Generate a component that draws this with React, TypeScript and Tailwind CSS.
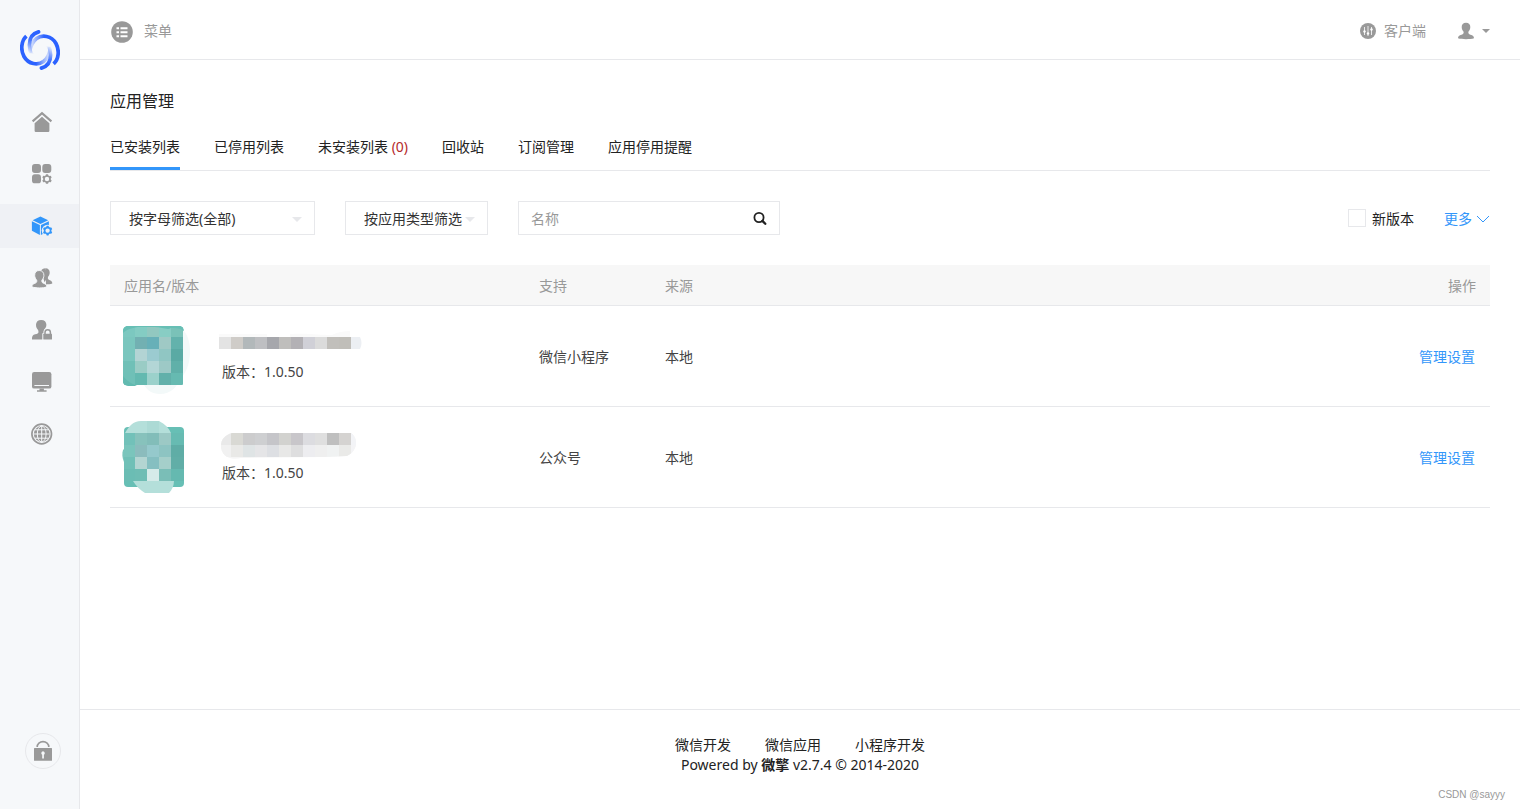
import type { ReactNode } from "react";

type Cell = [number, number, number, number, string];

function Gear({ cx, cy, halo }: { cx: number; cy: number; halo: string }) {
  const teeth = [0, 60, 120, 180, 240, 300];
  return (
    <g>
      <circle cx={cx} cy={cy} r={5.9} fill={halo} />
      {teeth.map((a) => (
        <rect key={a} x={cx - 1.2} y={cy - 4.8} width={2.4} height={2.6} rx={0.6} fill="currentColor" transform={`rotate(${a} ${cx} ${cy})`} />
      ))}
      <circle cx={cx} cy={cy} r={3} fill={halo} stroke="currentColor" strokeWidth={1.6} />
    </g>
  );
}

function Icon({ children }: { children: ReactNode }) {
  return (
    <svg viewBox="0 0 22 22" className="size-[22px]" fill="currentColor" aria-hidden="true">
      {children}
    </svg>
  );
}

const navItems: { label: string; active?: boolean; icon: ReactNode }[] = [
  {
    label: "首页",
    icon: (
      <Icon>
        <path d="M1.6 10.4 11 2.2l9.4 8.2" fill="none" stroke="currentColor" strokeWidth="2.1" />
        <path d="M3.6 12.2 11 5.8l7.4 6.4v7.6a1.2 1.2 0 0 1-1.2 1.2H4.8a1.2 1.2 0 0 1-1.2-1.2z" />
      </Icon>
    ),
  },
  {
    label: "平台",
    icon: (
      <Icon>
        <rect x="1" y="1" width="9" height="9" rx="2.9" />
        <rect x="11.3" y="1" width="9" height="9" rx="2.9" />
        <rect x="1" y="11.3" width="9" height="9" rx="2.9" />
        <Gear cx={16} cy={16} halo="#f6f8fa" />
      </Icon>
    ),
  },
  {
    label: "应用",
    active: true,
    icon: (
      <Icon>
        <path d="M9.4 1.5 17.2 5.3 9.4 9.1 1.6 5.3z" />
        <path d="M.9 6.2 8.9 10.1v9.9L.9 15.8z" />
        <path d="M9.9 10.1 17.9 6.2v9.6L9.9 20z" />
        <Gear cx={16.6} cy={15.6} halo="#eff1f5" />
      </Icon>
    ),
  },
  {
    label: "用户",
    icon: (
      <Icon>
        <path d="M14.6 1.2c2.6 0 4.1 1.8 4.1 4.3 0 2-1 3.6-1.8 4.6-.3 1.9.3 2.5 2 3.2 1.6.7 2.4 1.2 2.4 3.3-2 .8-4 .9-6.3.9z" />
        <path d="M10.2 3.6c.6-1.5 2-2.4 4.3-2.4l2 9-3 5z" />
        <path d="M8.2 3.5c3 0 4.7 2 4.7 4.8 0 2.1-1 3.8-2 4.8-.3 2 .1 2.6 2 3.3 1.8.7 2.8 1.4 2.8 3.4-2 .9-4.4 1.1-7.3 1.1s-5.500-.2-7.500-1.1c0-2 1-2.700 2.800-3.400 1.900-.7 2.300-1.300 2-3.300-1-1-2-2.700-2-4.800 0-2.800 1.500-4.800 4.500-4.800z" stroke="#f6f8fa" strokeWidth="0.9" />
      </Icon>
    ),
  },
  {
    label: "权限",
    icon: (
      <Icon>
        <path d="M10.200.9c3.300 0 5.200 2 5.200 4.900 0 2.400-1.400 3.900-2.400 4.900-.6 1.500-.4 2.100-.4 2.900v7H1c0-3.700.9-4.600 3.200-5.300 2.200-.7 3.300-1.200 3.300-2.400 0-.9-.2-1.600-.6-2.200-1-1-1.900-2.500-1.900-4.900 0-2.900 1.900-4.900 5.200-4.900z" />
        <path d="M11.300 21.500v-7.300h1.400v-1c0-2 1.500-3.700 4-3.700s4 1.700 4 3.700v1H22v7.300z" fill="#f6f8fa" />
        <path d="M14 15v-1.500a2.700 2.700 0 0 1 5.400 0V15" fill="none" stroke="currentColor" strokeWidth="1.500" />
        <rect x="12.300" y="14.800" width="8.700" height="5.800" rx="0.500" />
      </Icon>
    ),
  },
  {
    label: "站点",
    icon: (
      <Icon>
        <rect x="1" y="1" width="19.400" height="16.600" rx="2.200" />
        <rect x="3.400" y="14" width="14.600" height="1" fill="#f6f8fa" />
        <path d="M8.500 17.500h4.400v1.700h2.700v1.500H6v-1.500h2.500z" />
      </Icon>
    ),
  },
  {
    label: "系统",
    icon: (
      <Icon>
        <circle cx="10.700" cy="11" r="9.800" fill="none" stroke="currentColor" strokeWidth="1.700" />
        <circle cx="10.700" cy="11" r="7.900" />
        <g fill="none" stroke="#f6f8fa" strokeWidth="1">
          <ellipse cx="10.700" cy="11" rx="4.400" ry="8" />
          <path d="M10.700 3v16M2.700 11h16M4 6.800h13.400M4 15.200h13.400" />
        </g>
      </Icon>
    ),
  },
];

function Logo() {
  return (
    <svg viewBox="0 0 40 40" className="size-10" fill="none" aria-hidden="true">
      <defs>
        <linearGradient id="sweep" gradientUnits="userSpaceOnUse" x1="16" y1="30" x2="31" y2="30">
          <stop offset="0" stopColor="#2b62ff" />
          <stop offset="0.500" stopColor="#2b62ff" stopOpacity="0.500" />
          <stop offset="1" stopColor="#2b62ff" stopOpacity="0" />
        </linearGradient>
        <linearGradient id="tail" gradientUnits="userSpaceOnUse" x1="13" y1="5" x2="10" y2="24">
          <stop offset="0" stopColor="#2b62ff" />
          <stop offset="0.300" stopColor="#2b62ff" stopOpacity="0.850" />
          <stop offset="1" stopColor="#2b62ff" stopOpacity="0" />
        </linearGradient>
        <g id="half">
          <path d="M6.400 6.200C1 11 .5 20 4 26.500 8.500 34.500 18 35.500 23.500 31.500 28 28 30 23 30.300 17" stroke="url(#sweep)" strokeWidth="3.700" />
          <path d="M18.600 1.900C12.500 3.500 9.400 8.500 9.400 15c0 4 .8 7 2.600 10" stroke="url(#tail)" strokeWidth="3.700" strokeLinecap="round" />
        </g>
      </defs>
      <use href="#half" />
      <use href="#half" transform="rotate(180 20 20)" />
    </svg>
  );
}

function Cells({ cells }: { cells: Cell[] }) {
  return (
    <>
      {cells.map(([x, y, w, h, fill], i) => (
        <rect key={i} x={x} y={y} width={w} height={h} fill={fill} shapeRendering="crispEdges" />
      ))}
    </>
  );
}

function grid(xs: number[], ys: number[], rows: string[][]): Cell[] {
  return rows.flatMap((row, r) =>
    row.map((c, i): Cell => [xs[i], ys[r], xs[i + 1] - xs[i], ys[r + 1] - ys[r], c]),
  );
}

function AvatarA() {
  const cells = grid([1, 13, 25, 37, 49, 61], [9, 19, 31, 43, 55, 67], [
    ["#7cc8c0", "#84ccc3", "#92c8c0", "#88cdc4", "#7ac2b8"],
    ["#7ac6be", "#72b0b2", "#67b0b8", "#9fc9c5", "#63b2ac"],
    ["#7ac6be", "#b3d4d4", "#9bcbd0", "#90c6c3", "#5aaaa4"],
    ["#70c0b7", "#9accc5", "#b3d6d6", "#9dc9c6", "#60b0a9"],
    ["#6fc0b7", "#64b9b0", "#9bd1cb", "#62b0aa", "#66bab1"],
  ]);
  return (
    <svg viewBox="0 0 68 76" className="h-[76px] w-[68px] shrink-0" role="img" aria-label="应用图标">
      <path d="M60 11c5 4 8 12 8 22 0 13-4 22-10 28-3 8-9 15-20 15-8 0-13-4-16-9z" fill="#f3f9f9" />
      <clipPath id="clipA"><rect x="1" y="8" width="61" height="60" rx="5" /></clipPath>
      <g clipPath="url(#clipA)">
        <rect x="1" y="8" width="60" height="59" fill="#67bfb5" />
        <Cells cells={cells} />
        <path d="M1 8h61v5c-4-3-9-3-13-3-3 2-6 0-9 0-12-2-30-3-39 5z" fill="#67bfb5" />
        <path d="M1 58c4 5 9 8 14 10H1z" fill="#62bab0" />
      </g>
    </svg>
  );
}

function AvatarB() {
  const cells = grid([2, 13, 25, 37, 49, 62], [14, 26, 38, 50, 62], [
    ["#72c1b9", "#87c2bc", "#82bdb9", "#9cc9c5", "#67bbb2"],
    ["#7ac5bc", "#8bbcbd", "#95c9cc", "#8dc4c2", "#5fada6"],
    ["#70c0b7", "#b3d5d2", "#85bfc1", "#a5cfca", "#61aea7"],
    ["#6bbdb4", "#6ebdb4", "#d5ebe9", "#7abeb7", "#65b9b0"],
  ]);
  return (
    <svg viewBox="0 0 68 76" className="h-[76px] w-[68px] shrink-0" role="img" aria-label="应用图标">
      <clipPath id="clipB"><rect x="2" y="8" width="60" height="60" rx="4" /></clipPath>
      <g clipPath="url(#clipB)">
        <rect x="2" y="8" width="60" height="60" fill="#67bfb5" />
        <Cells cells={cells} />
      </g>
      <path d="M1 31c-1 3-1 8 1 12V30z" fill="#7ac5bc" />
      <path d="M3 14C7 7 11 2 19 2h18c6 3 10 7 12 12z" fill="#b4dfda" />
      <path d="M25 2h12v12H25z" fill="#acdad5" />
      <path d="M11 62h41c0 4-2 9-5 12H23C18 71 14 67 11 62z" fill="#b4dfda" />
    </svg>
  );
}

function NameA() {
  const cs = ["#e3e3e3", "#cfccc8", "#b2b8ba", "#bebfc2", "#a6a7ac", "#bfbebc", "#b3b1b5", "#d0d0d7", "#dbdbdb", "#c1bfbb", "#c0beb9"];
  return (
    <svg viewBox="0 0 144 32" className="h-8 w-36" role="img" aria-label="应用名">
      <path d="M1 6h48v3H1zM72 6c20-1 30 1 42 1 6-3 12-4 18-4v6H72z" fill="#fafafa" />
      <Cells cells={cs.map((c, i): Cell => [1 + i * 12, 9, 12, 12, c])} />
      <path d="M133 9h9c2 4 2 8 0 12h-9z" fill="#eceff3" />
    </svg>
  );
}

function NameB() {
  const xs = [1, 13, 25, 37, 49, 61, 73, 85, 97, 109, 121, 133, 139];
  const cells = grid(xs, [4, 16, 28], [
    ["#e9e9e9", "#d9d9d4", "#cccccd", "#cecfd1", "#c5c5c9", "#d2d2cf", "#c8c6ca", "#dcdce0", "#dfdfdf", "#bfbfbf", "#d5d3d1", "#f3f4f7"],
    ["#f1f1f1", "#e9e9e7", "#dfe4e5", "#e5e5e7", "#dddfe3", "#e8e8e7", "#dededf", "#ededf0", "#efefef", "#f0f2f2", "#eaeae8", "#f4f4f6"],
  ]);
  return (
    <svg viewBox="0 0 144 32" className="h-8 w-36" role="img" aria-label="应用名">
      <clipPath id="clipName"><path d="M14 4h119c3 2 5 5 5 10s-3 10-9 13c-34 2-70 1-106 2C11 32 3 26 3 17 3 10 7 6 14 4z" /></clipPath>
      <g clipPath="url(#clipName)">
        <rect width="144" height="32" fill="#f5f5f5" />
        <Cells cells={cells} />
      </g>
    </svg>
  );
}

const apps = [
  { avatar: <AvatarA />, name: <NameA />, version: "1.0.50", support: "微信小程序", source: "本地" },
  { avatar: <AvatarB />, name: <NameB />, version: "1.0.50", support: "公众号", source: "本地" },
];

function Caret({ className }: { className: string }) {
  return (
    <svg viewBox="0 0 10 5" className={className} fill="currentColor" aria-hidden="true">
      <path d="M0 0h10L5 5z" />
    </svg>
  );
}

function Filter({ label, className }: { label: string; className: string }) {
  return (
    <div className={`relative ${className}`}>
      <select aria-label={label} className="h-[34px] w-full appearance-none border border-[#e7e8eb] bg-white pt-0.5 pl-[18px] text-[#333] outline-none">
        <option>{label}</option>
      </select>
      <Caret className="pointer-events-none absolute top-4 right-[13px] h-[5px] w-[10px] text-[#e7e8eb]" />
    </div>
  );
}

function Tab({ children, active }: { children: ReactNode; active?: boolean }) {
  return (
    <a href="#" aria-current={active ? "page" : undefined} className={`border-b-3 pt-[9px] pb-2 leading-6 ${active ? "border-[#3296fa]" : "border-transparent"}`}>
      {children}
    </a>
  );
}

export default function App() {
  return (
    <div className="flex min-h-screen bg-white font-['Noto_Sans','Noto_Sans_CJK_SC',sans-serif] text-sm text-[#222]">
      <aside className="flex w-20 shrink-0 flex-col border-r border-[#e7e8eb] bg-[#f6f8fa] pb-10 text-[#999]">
        <a href="#" aria-label="微擎" className="mt-[30px] mb-[30px] ml-5 size-10">
          <Logo />
        </a>
        <nav className="flex flex-col gap-2">
          {navItems.map((item) => (
            <a
              key={item.label}
              href="#"
              aria-label={item.label}
              className={`flex h-11 items-center justify-center pl-1 ${item.active ? "bg-[#eff1f5] text-[#3296fa]" : ""}`}
            >
              {item.icon}
            </a>
          ))}
        </nav>
        <button type="button" aria-label="锁定" className="mt-auto ml-[25px] flex size-9 items-center justify-center rounded-full border border-[#e7e8eb]">
          <svg viewBox="0 0 20 22" className="h-[22px] w-5" fill="currentColor" aria-hidden="true">
            <path d="M4.200 7a5.800 5.400 0 0 1 11.600 0" fill="none" stroke="currentColor" strokeWidth="1.600" />
            <rect x="1" y="8" width="18" height="12.800" rx="0.500" />
            <path d="M10 11.300a1.900 1.900 0 0 1 .9 3.500v3.700H9.200v-3.700a1.900 1.900 0 0 1 .8-3.500z" fill="#f6f8fa" />
          </svg>
        </button>
      </aside>

      <div className="flex min-w-0 flex-1 flex-col">
        <header className="flex h-[60px] items-center justify-between border-b border-[#e7e8eb] px-[30px] pt-0.5 text-[#999]">
          <button type="button" className="flex items-center gap-2.5">
            <svg viewBox="0 -1 24 24" className="size-6" fill="currentColor" aria-hidden="true">
              <circle cx="12" cy="12" r="10.800" />
              <path d="M6.500 7.200H9v2H6.500zM10.500 7.200h7v2h-7zM6.500 11.200H9v2H6.500zM10.500 11.200h7v2h-7zM6.500 15.200H9v2H6.500zM10.500 15.200h7v2h-7z" fill="#fff" />
            </svg>
            菜单
          </button>
          <div className="flex items-center gap-[31px]">
            <a href="#" className="flex items-center gap-2">
              <svg viewBox="0 0 16 16" className="size-4" fill="currentColor" aria-hidden="true">
                <circle cx="8" cy="8" r="8" />
                <path d="M4.500 4v8M8 3v10M11.500 4v8" stroke="#fff" strokeWidth="0.800" />
                <circle cx="4.500" cy="8.500" r="1.200" fill="#fff" />
                <circle cx="8" cy="10.500" r="1.200" fill="#fff" />
                <circle cx="11.500" cy="6.500" r="1.200" fill="#fff" />
              </svg>
              客户端
            </a>
            <button type="button" aria-label="账户" className="flex items-center gap-[7px]">
              <svg viewBox="0 0 18 18" className="size-[18px]" fill="currentColor" aria-hidden="true">
                <path d="M9 .8c2.900 0 4.300 1.800 4.300 4.300 0 2-.9 3.700-1.900 4.700-.2 1.800.1 2.200 2.100 2.900 2.300.8 3.500 1.400 3.500 3.600-2 .7-5 .9-8 .9s-6-.2-8-.9c0-2.200 1.200-2.800 3.500-3.600 2-.7 2.300-1.100 2.100-2.900-1-1-1.900-2.700-1.900-4.700C4.700 2.600 6.100.8 9 .8z" />
              </svg>
              <Caret className="h-1 w-2" />
            </button>
          </div>
        </header>

        <main className="flex-1 px-[30px] pt-[29px]">
          <h1 className="text-base leading-6">应用管理</h1>
          <nav className="mt-[13px] flex gap-[34px] border-b border-[#e7e8eb]">
            <Tab active>已安装列表</Tab>
            <Tab>已停用列表</Tab>
            <Tab>
              未安装列表 <span className="text-[#b52a2a]">(0)</span>
            </Tab>
            <Tab>回收站</Tab>
            <Tab>订阅管理</Tab>
            <Tab>应用停用提醒</Tab>
          </nav>

          <div className="mt-[30px] flex items-center gap-[30px]">
            <Filter label="按字母筛选(全部)" className="w-[205px]" />
            <Filter label="按应用类型筛选" className="w-[143px]" />
            <form className="flex h-[34px] w-[262px] items-center border border-[#e7e8eb] pr-3 pl-3">
              <input type="text" aria-label="名称" placeholder="名称" className="min-w-0 flex-1 pt-0.5 outline-none placeholder:text-[#999]" />
              <button type="button" aria-label="搜索">
                <svg viewBox="0 0 14 14" className="size-3.5" fill="none" stroke="#222" aria-hidden="true">
                  <circle cx="6" cy="6.500" r="4.600" strokeWidth="1.800" />
                  <path d="m9.400 9.900 2.900 2.900" strokeWidth="2.300" strokeLinecap="round" />
                </svg>
              </button>
            </form>
            <label className="ml-auto flex items-center gap-1.5">
              <input type="checkbox" className="size-[18px] appearance-none border border-[#e7e8eb] bg-white checked:bg-[#3296fa]" />
              <span className="pt-0.5">新版本</span>
            </label>
            <button type="button" className="flex items-center gap-1 pt-0.5 text-[#3296fa]">
              更多
              <svg viewBox="0 0 14 8" className="h-2 w-3.5" fill="none" stroke="currentColor" aria-hidden="true">
                <path d="m1 1 6 6 6-6" />
              </svg>
            </button>
          </div>

          <table className="mt-[30px] w-full table-fixed border-separate border-spacing-0 text-left text-[#444]">
            <thead className="bg-[#f7f7f7] text-[#999]">
              <tr className="h-[41px]">
                <th className="w-[429px] border-b border-[#e7e8eb] pt-0.5 pl-3.5 font-normal">应用名/版本</th>
                <th className="w-[126px] border-b border-[#e7e8eb] pt-0.5 font-normal">支持</th>
                <th className="border-b border-[#e7e8eb] pt-0.5 font-normal">来源</th>
                <th className="border-b border-[#e7e8eb] pt-0.5 pr-3.5 text-right font-normal">操作</th>
              </tr>
            </thead>
            <tbody>
              {apps.map((app) => (
                <tr key={app.support}>
                  <td className="border-b border-[#e7e8eb]">
                    <div className="flex h-[100px] items-center gap-7 pl-3">
                      {app.avatar}
                      <div>
                        {app.name}
                        <p className="pl-1 leading-6">版本：{app.version}</p>
                      </div>
                    </div>
                  </td>
                  <td className="border-b border-[#e7e8eb] pt-0.5">{app.support}</td>
                  <td className="border-b border-[#e7e8eb] pt-0.5">{app.source}</td>
                  <td className="border-b border-[#e7e8eb] pt-0.5 pr-[15px] text-right">
                    <a href="#" className="text-[#3296fa]">管理设置</a>
                  </td>
                </tr>
              ))}
            </tbody>
          </table>
        </main>

        <footer className="relative h-[100px] border-t border-[#e7e8eb] pt-[25px] text-center leading-5">
          <div className="flex justify-center gap-[34px]">
            <a href="#">微信开发</a>
            <a href="#">微信应用</a>
            <a href="#">小程序开发</a>
          </div>
          <p>
            Powered by <b>微擎</b> v2.7.4 © 2014-2020
          </p>
          <span className="absolute right-[15px] bottom-1 font-['Liberation_Sans',sans-serif] text-[10px] text-[#999]">CSDN @sayyy</span>
        </footer>
      </div>
    </div>
  );
}
